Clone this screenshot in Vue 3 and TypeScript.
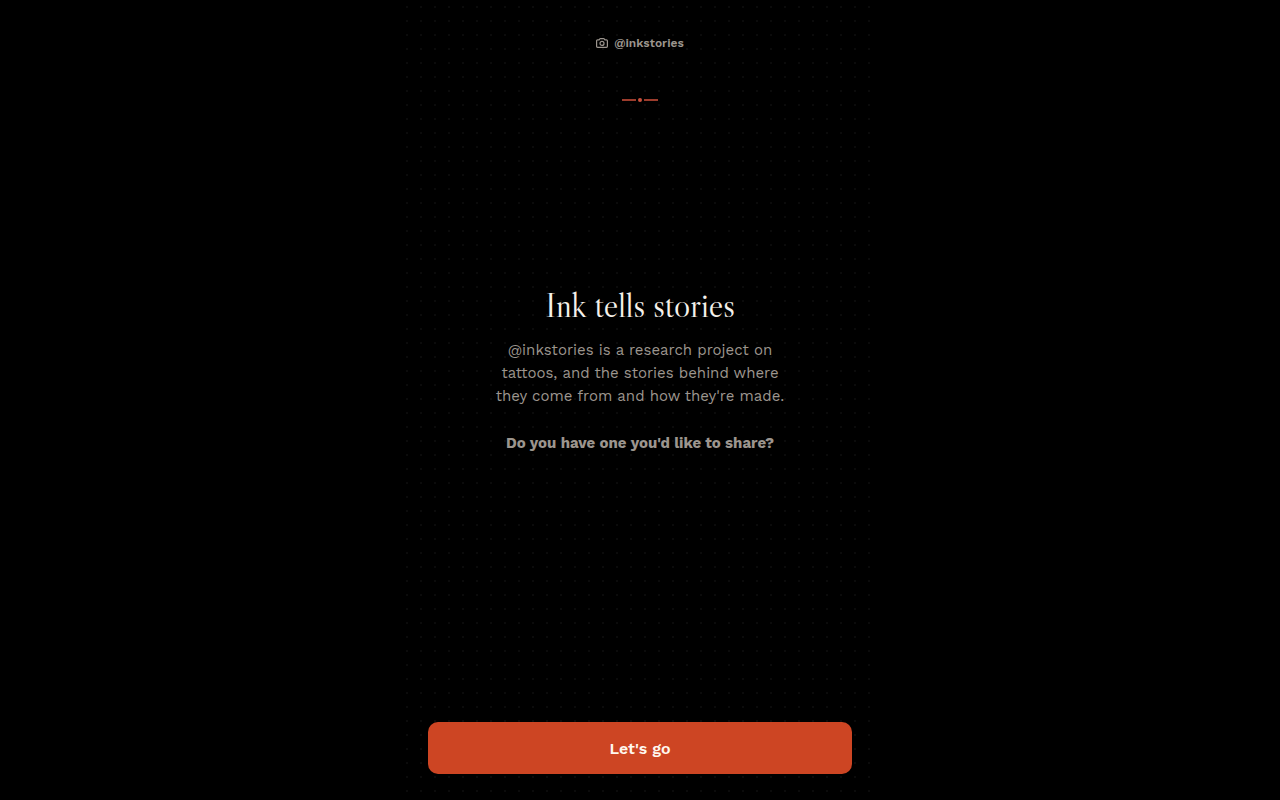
<script setup lang="ts">
import { ref } from 'vue'

const handle = '@inkstories'
const started = ref<boolean>(false)

function start(): void {
  started.value = true
}
</script>

<template>
  <div class="page">
    <div class="column">
      <header class="top">
        <a class="handle" href="#inkstories">
          <svg class="camera" viewBox="0 0 12 12" aria-hidden="true">
            <path
              d="M1.6 2.8h1.5l.7-.9c.2-.2.4-.3.6-.3h3.2c.2 0 .4.1.6.3l.7.9h1.5c.6 0 1 .4 1 1v5.5c0 .6-.4 1-1 1H1.6c-.6 0-1-.4-1-1V3.8c0-.6.4-1 1-1z"
            />
            <circle cx="6" cy="6.4" r="2" />
          </svg>
          <span>{{ handle }}</span>
        </a>
        <div class="divider" aria-hidden="true">
          <span class="line"></span>
          <span class="dot"></span>
          <span class="line"></span>
        </div>
      </header>

      <main class="intro">
        <h1>Ink tells stories</h1>
        <p>
          {{ handle }} is a research project on<br />
          tattoos, and the stories behind where<br />
          they come from and how they're made.
        </p>
        <p class="question">Do you have one you'd like to share?</p>
      </main>

      <button class="go" type="button" :aria-pressed="started" @click="start">Let's go</button>
    </div>
  </div>
</template>

<style>
body {
  margin: 0;
  background: #000;
}
</style>

<style scoped>
.page {
  min-height: 100vh;
  display: flex;
  justify-content: center;
  background: #000;
  color: #9c958e;
  font-family: 'Work Sans', Inter, 'Liberation Sans', sans-serif;
}

.column {
  box-sizing: border-box;
  width: 100%;
  max-width: 480px;
  min-height: 100vh;
  display: flex;
  flex-direction: column;
  padding: 34px 28px 26px;
  background-image: radial-gradient(circle, #0b0b0b 1px, transparent 1px);
  background-size: 14px 14px;
}

.top {
  display: flex;
  flex-direction: column;
  align-items: center;
  gap: 46px;
}

.handle {
  display: flex;
  align-items: center;
  gap: 6px;
  color: inherit;
  font-size: 12px;
  font-weight: 600;
  line-height: 18px;
  text-decoration: none;
}

.camera {
  width: 12px;
  height: 12px;
  fill: none;
  stroke: currentColor;
  stroke-width: 1.2;
  stroke-linejoin: round;
}

.divider {
  display: flex;
  align-items: center;
  gap: 2px;
}

.line {
  width: 14px;
  height: 2px;
  background: #9c3c2c;
}

.dot {
  width: 4px;
  height: 4px;
  border-radius: 50%;
  background: #c8503c;
}

.intro {
  flex: 1;
  display: flex;
  flex-direction: column;
  align-items: center;
  justify-content: center;
  padding-bottom: 83px;
  text-align: center;
}

h1 {
  margin: 0 0 15px;
  color: #f5f1ea;
  font-family: 'Libre Caslon Display', 'Liberation Serif', serif;
  font-size: 34px;
  font-weight: 400;
  line-height: 38px;
}

p {
  margin: 0;
  font-size: 15px;
  font-weight: 400;
  line-height: 23px;
}

.question {
  margin-top: 24px;
  font-weight: 700;
}

.go {
  height: 52px;
  border: 0;
  border-radius: 10px;
  background: #cd4523;
  color: #fff8f0;
  font: inherit;
  font-size: 16px;
  font-weight: 600;
  cursor: pointer;
}
</style>
